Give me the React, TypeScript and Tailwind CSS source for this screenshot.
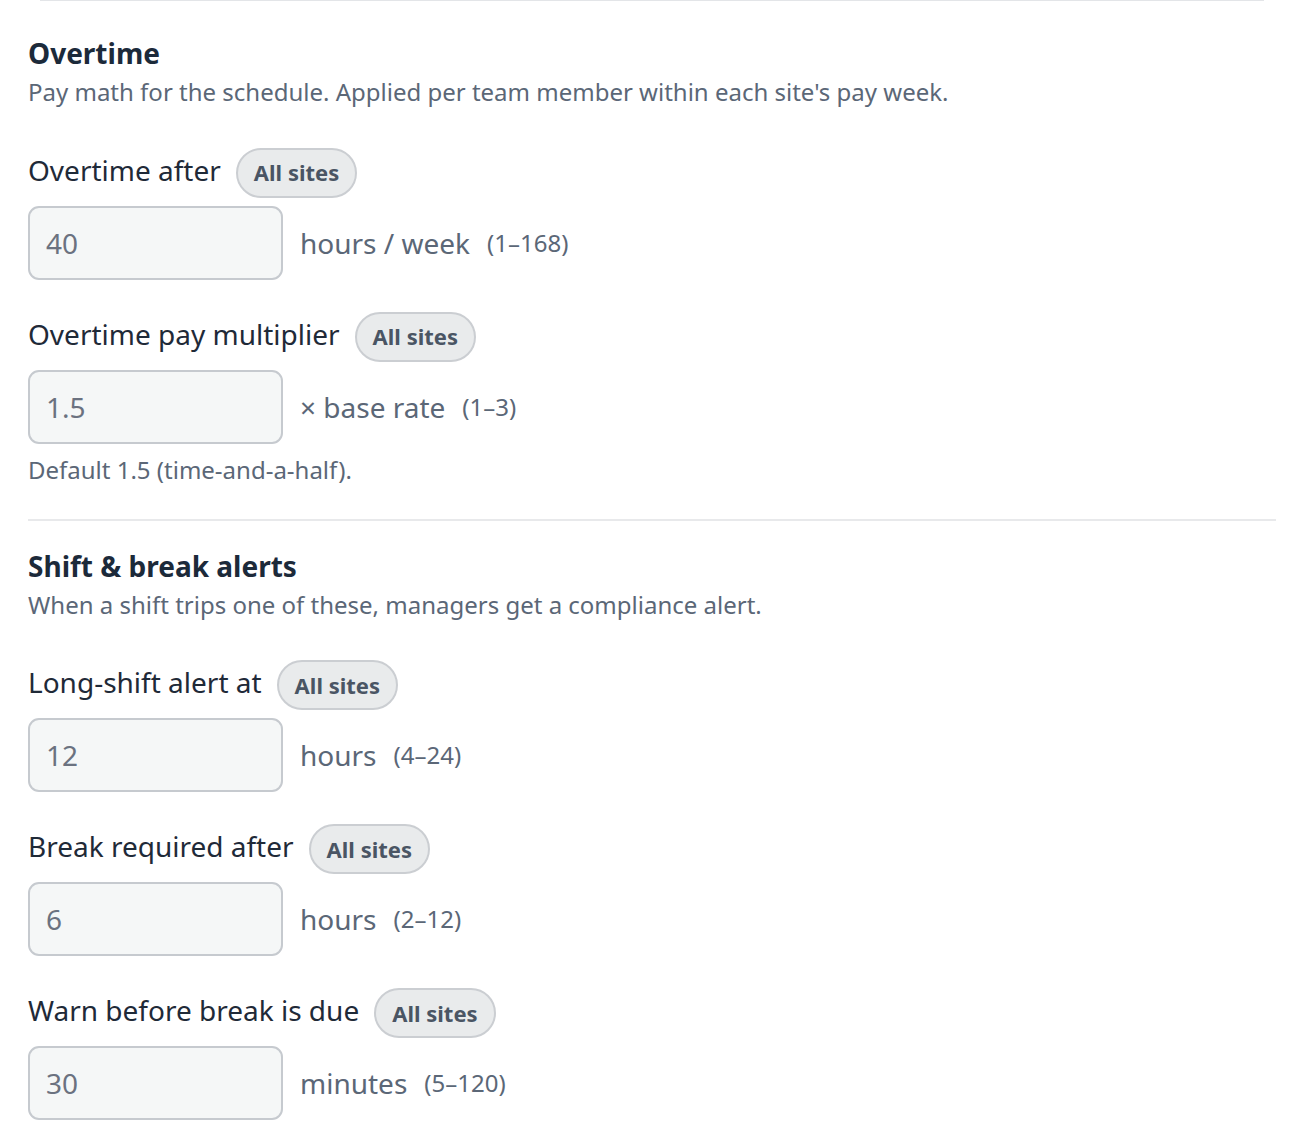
const fields = [
  { label: 'Overtime after', value: '40', unit: 'hours / week', range: '(1–168)' },
  { label: 'Overtime pay multiplier', value: '1.5', unit: '× base rate', range: '(1–3)', help: 'Default 1.5 (time-and-a-half).' },
]

const alerts = [
  { label: 'Long-shift alert at', value: '12', unit: 'hours', range: '(4–24)' },
  { label: 'Break required after', value: '6', unit: 'hours', range: '(2–12)' },
  { label: 'Warn before break is due', value: '30', unit: 'minutes', range: '(5–120)' },
]

type Field = { label: string; value: string; unit: string; range: string; help?: string }

function SettingField({ f, first }: { f: Field; first?: boolean }) {
  return (
    <div className={first ? 'mt-[37px]' : 'mt-[32px]'}>
      <div className="flex items-start gap-[15px]">
        <span className="text-[28px] leading-[44px] text-[#1f2a38]">{f.label}</span>
        <span className="h-[50px] flex items-center px-[16px] rounded-full border-2 border-[#cbced2] bg-[#e9ebec] text-[22px] font-bold text-[#4a5564]">
          All sites
        </span>
      </div>
      <div className="mt-[8px] flex items-center gap-[17px]">
        <input
          defaultValue={f.value}
          className="w-[255px] h-[74px] px-[16px] rounded-[11px] border-2 border-[#c6cacf] bg-[#f5f7f7] text-[28px] text-[#6b7280] outline-none"
        />
        <span className="text-[28px] text-[#5b6777]">{f.unit}</span>
        <span className="text-[24px] text-[#5b6777]">{f.range}</span>
      </div>
      {f.help && <p className="mt-[8px] text-[24px] leading-[36.75px] text-[#5b6777]">{f.help}</p>}
    </div>
  )
}

export default function App() {
  return (
    <div className="bg-white min-h-screen font-['Noto_Sans','Open_Sans',sans-serif]">
      <div className="mx-[40px] h-px bg-[#e3e5e8]" />
      <div className="px-[28px] pt-[31px] pb-10">
        <h2 className="text-[28px] leading-[42px] font-bold text-[#1c2a3a]">Overtime</h2>
        <p className="text-[24px] leading-[36.75px] text-[#5b6777]">
          Pay math for the schedule. Applied per team member within each site's pay week.
        </p>
        {fields.map((f, i) => (
          <SettingField key={f.label} f={f} first={i === 0} />
        ))}

        <div className="mt-[30px] h-[2px] bg-[#e8e9eb]" />

        <h2 className="mt-[24px] text-[28px] leading-[42px] font-bold text-[#1c2a3a]">Shift &amp; break alerts</h2>
        <p className="text-[24px] leading-[36.75px] text-[#5b6777]">
          When a shift trips one of these, managers get a compliance alert.
        </p>
        {alerts.map((f, i) => (
          <SettingField key={f.label} f={f} first={i === 0} />
        ))}
      </div>
    </div>
  )
}
